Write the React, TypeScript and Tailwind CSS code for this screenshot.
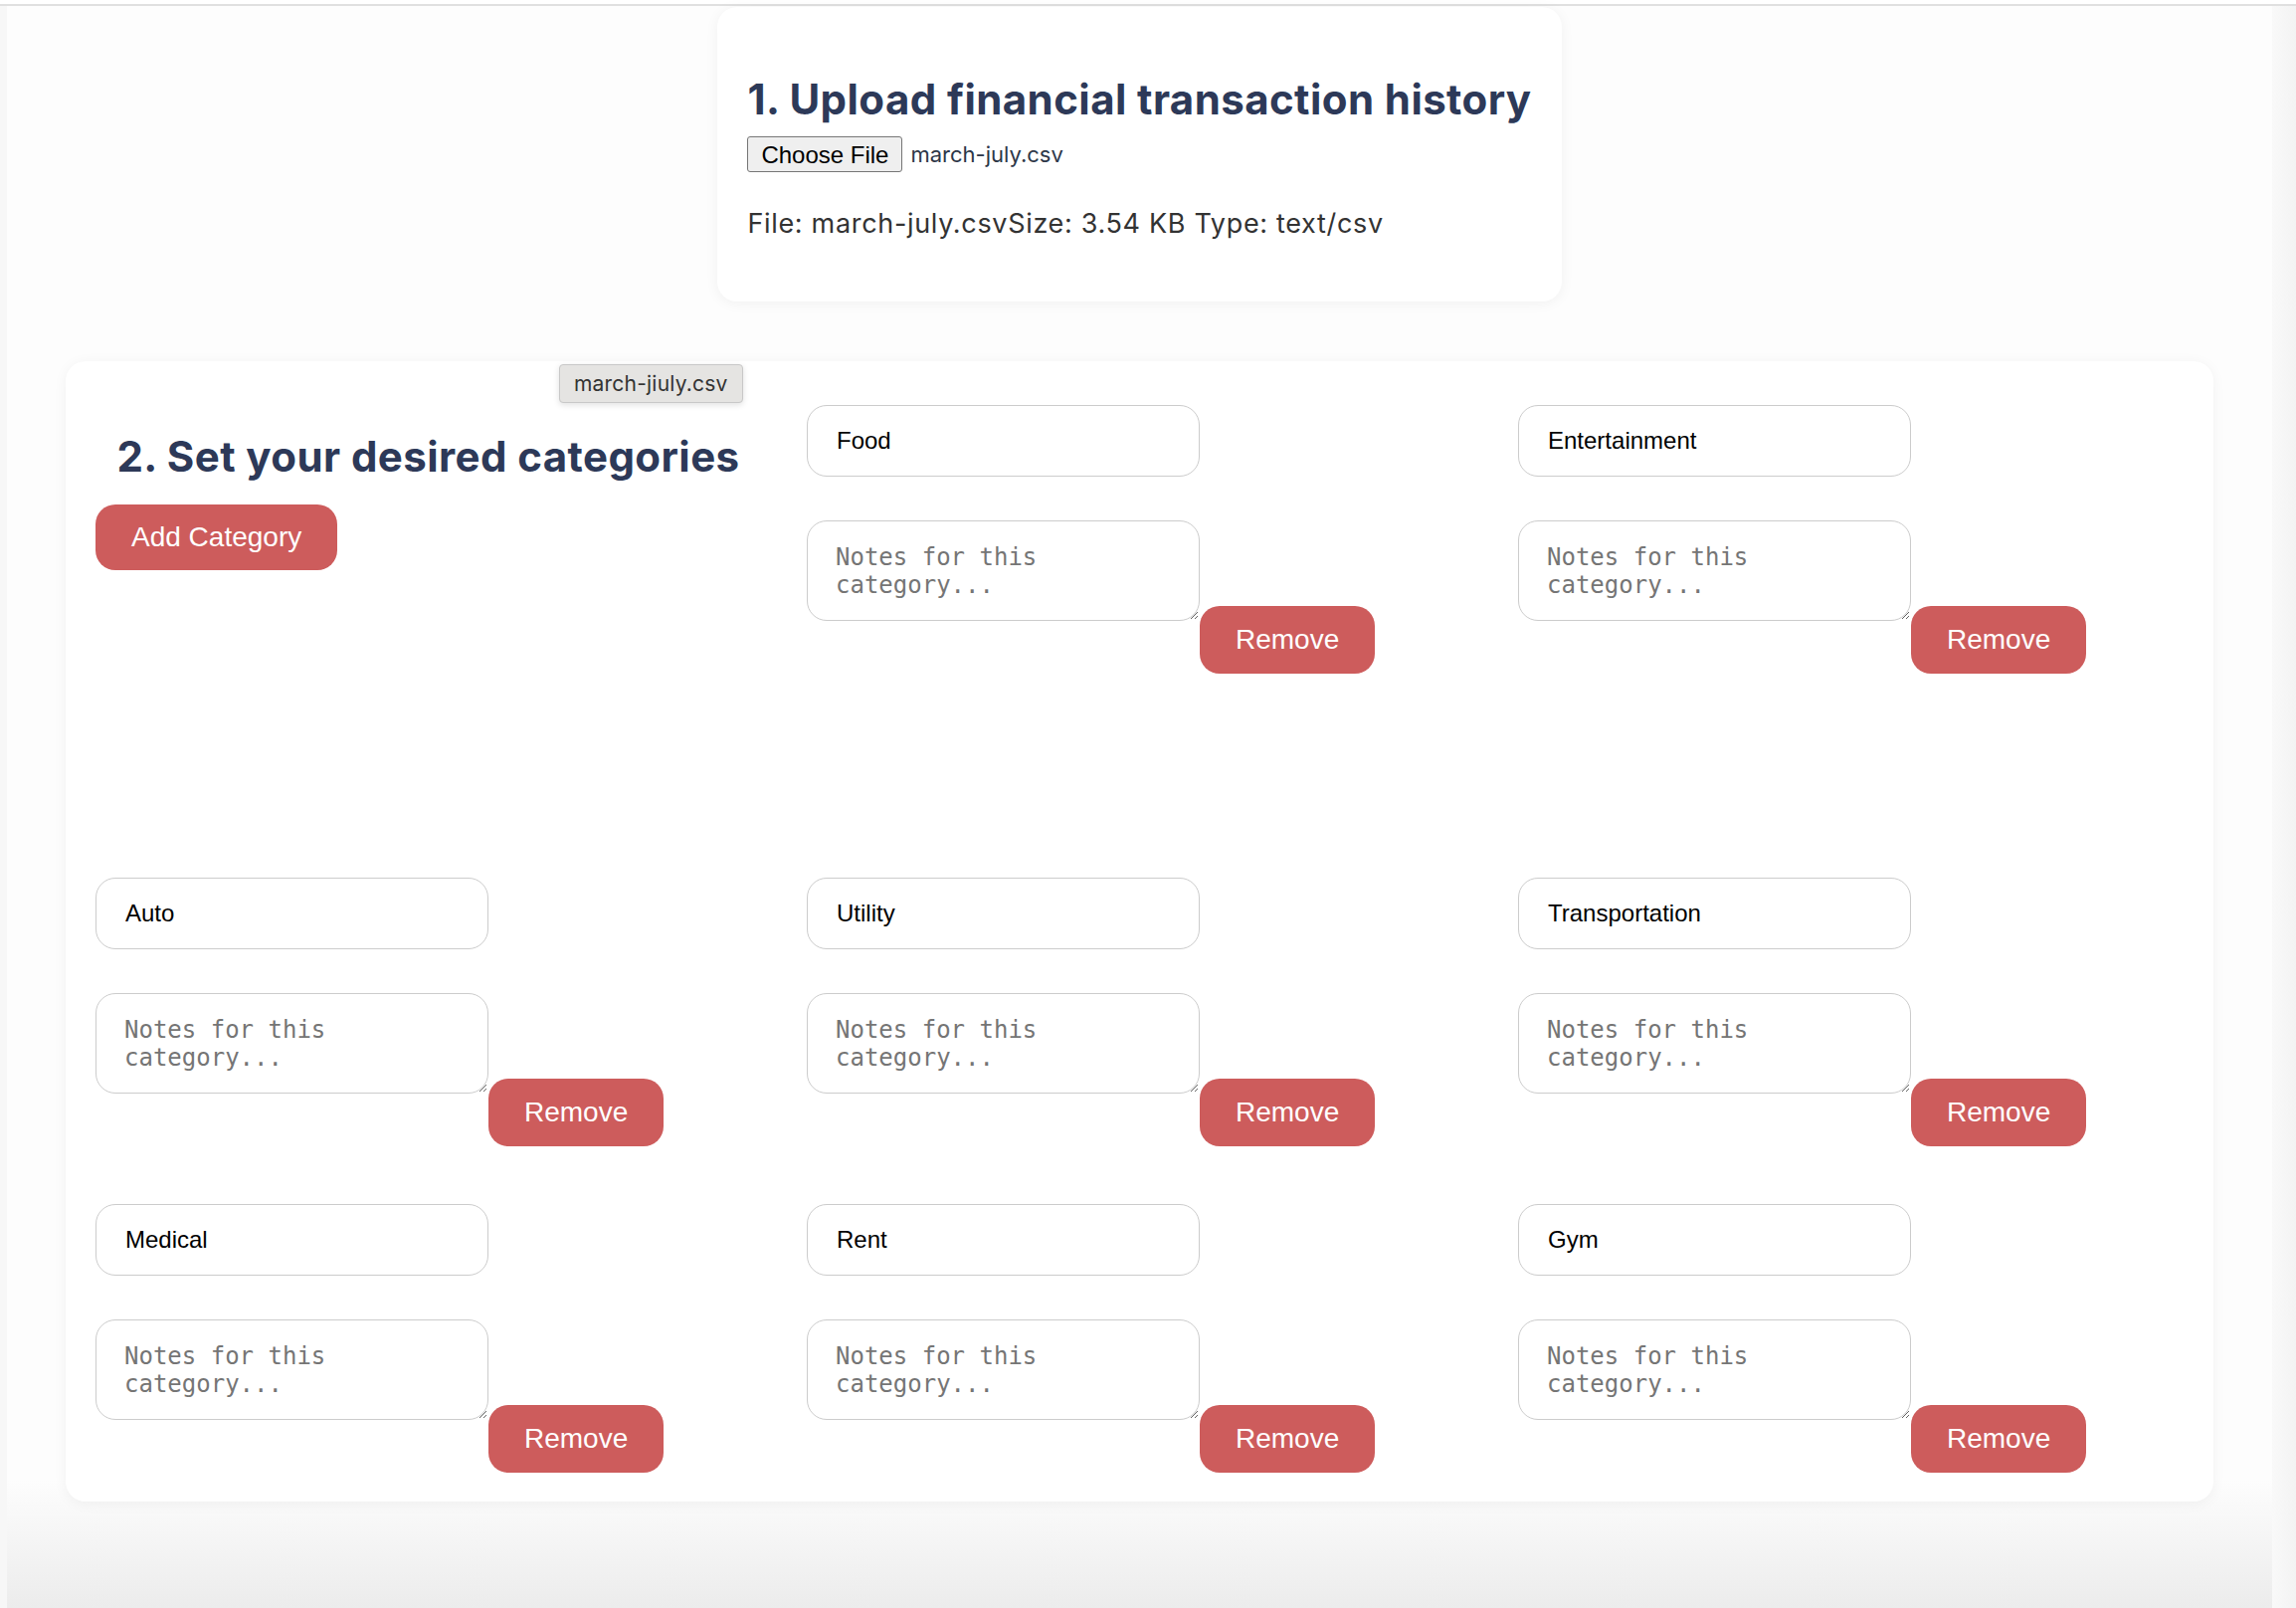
import { useState } from "react";

type Category = {
  id: number;
  name: string;
  notes: string;
};

const initialCategories: Category[] = [
  { id: 1, name: "Food", notes: "" },
  { id: 2, name: "Entertainment", notes: "" },
  { id: 3, name: "Auto", notes: "" },
  { id: 4, name: "Utility", notes: "" },
  { id: 5, name: "Transportation", notes: "" },
  { id: 6, name: "Medical", notes: "" },
  { id: 7, name: "Rent", notes: "" },
  { id: 8, name: "Gym", notes: "" },
];

const sans = "font-['Liberation_Sans',Arial,sans-serif]";
const inter = "font-['Inter','Noto_Sans',sans-serif]";

function CategoryItem({
  category,
  onChange,
  onRemove,
}: {
  category: Category;
  onChange: (next: Category) => void;
  onRemove: () => void;
}) {
  return (
    <div className="flex flex-col">
      <input
        type="text"
        value={category.name}
        onChange={(event) => onChange({ ...category, name: event.target.value })}
        className={`h-[72px] w-[395px] rounded-[20px] border border-[#cccccc] bg-white px-[29px] text-[24px] text-black outline-none ${sans}`}
      />
      <div className="mt-[44px] flex items-start">
        <textarea
          value={category.notes}
          onChange={(event) => onChange({ ...category, notes: event.target.value })}
          placeholder="Notes for this category..."
          className="h-[101px] w-[395px] rounded-[20px] border border-[#cccccc] bg-white px-[28px] pt-[22px] font-['DejaVu_Sans_Mono',monospace] text-[24px] leading-[28px] text-black outline-none placeholder:text-[#757575]"
        />
        <button
          type="button"
          onClick={onRemove}
          className={`mt-[86px] h-[68px] rounded-[20px] bg-[#cd5c5c] px-[36px] text-[28px] text-white ${sans}`}
        >
          Remove
        </button>
      </div>
    </div>
  );
}

export default function App() {
  const [categories, setCategories] = useState<Category[]>(initialCategories);

  function addCategory() {
    const nextId = categories.reduce((max, item) => Math.max(max, item.id), 0) + 1;
    setCategories([...categories, { id: nextId, name: "", notes: "" }]);
  }

  function updateCategory(next: Category) {
    setCategories(categories.map((item) => (item.id === next.id ? next : item)));
  }

  function removeCategory(id: number) {
    setCategories(categories.filter((item) => item.id !== id));
  }

  return (
    <div className="flex min-h-screen flex-col bg-white">
      <div className="h-[4px] bg-white" />
      <div className="h-[2px] bg-[#e0e0e0]" />
      <div className="flex flex-1">
        <div className="w-[7px] bg-[#f7f7f7]" />
        <main className="flex flex-1 flex-col items-center bg-linear-to-b from-[#fdfdfd] via-[#fdfdfd] via-92% to-[#ececec] pb-[100px]">
          <section className="mt-[1px] w-fit rounded-[20px] bg-white px-[30px] pb-[63px] shadow-[0_2px_14px_rgba(0,0,0,0.05)]">
            <h2 className={`mt-[69px] text-[42px] font-bold leading-[48px] tracking-[0.01em] text-[#2d3958] ${inter}`}>
              1. Upload financial transaction history
            </h2>
            <div className="mt-[13px] flex items-center">
              <button
                type="button"
                className={`h-[36px] rounded-[3px] border border-[#767676] bg-[#efefef] px-[13px] text-[24px] text-black ${sans}`}
              >
                Choose File
              </button>
              <span className={`ml-[8px] text-[22px] text-[#2d3748] ${inter}`}>march-july.csv</span>
            </div>
            <p className={`mt-[36px] text-[27px] leading-[31px] tracking-[0.025em] text-[#333333] ${inter}`}>
              File: march-july.csvSize: 3.54 KB Type: text/csv
            </p>
          </section>

          <section className="relative mt-[60px] self-stretch mx-[59px] rounded-[20px] bg-white px-[30px] pb-[29px] pt-[44px] shadow-[0_2px_14px_rgba(0,0,0,0.05)]">
            <div className="grid grid-cols-3 gap-x-[46px] gap-y-[58px]">
              <div className="flex min-h-[417px] flex-col">
                <h2 className={`mt-[28px] text-center text-[42px] font-bold leading-[48px] tracking-[0.01em] text-[#2d3958] ${inter}`}>
                  2. Set your desired categories
                </h2>
                <button
                  type="button"
                  onClick={addCategory}
                  className={`mt-[24px] h-[66px] self-start rounded-[20px] bg-[#cd5c5c] px-[36px] text-[28px] text-white ${sans}`}
                >
                  Add Category
                </button>
              </div>
              {categories.map((category) => (
                <CategoryItem
                  key={category.id}
                  category={category}
                  onChange={updateCategory}
                  onRemove={() => removeCategory(category.id)}
                />
              ))}
            </div>

            <div
              className={`absolute left-[496px] top-[3px] flex h-[39px] items-center rounded-[4px] border border-[#c8c8c8] bg-[#e5e4e2] px-[14px] text-[21px] tracking-[0.01em] text-[#333333] shadow-[0_2px_6px_rgba(0,0,0,0.12)] ${inter}`}
            >
              march-jiuly.csv
            </div>
          </section>
        </main>
        <div className="w-[24px] bg-linear-to-r from-[#f9f9f9] to-[#f3f3f3]" />
      </div>
    </div>
  );
}
